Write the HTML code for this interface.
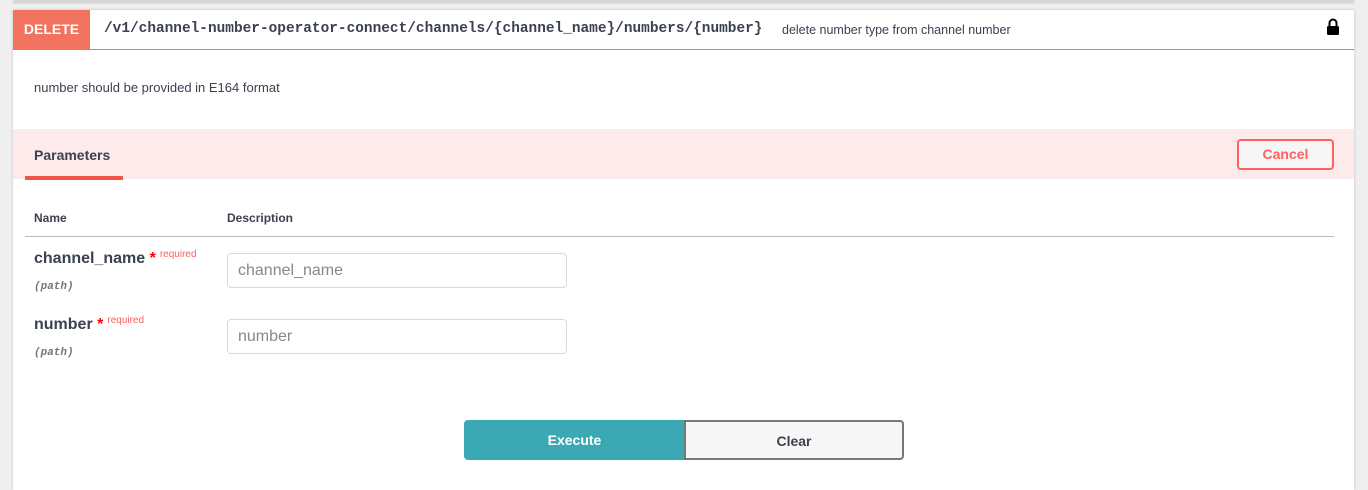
<!DOCTYPE html>
<html><head><style>
body{margin:0;width:1368px;height:483px;background:#efefef;font-family:"Liberation Sans",sans-serif;position:relative;overflow:hidden}
.top{position:absolute;left:13px;top:0;width:1341px;height:2px;background:#d6d6d6;box-shadow:0 1px 2px rgba(0,0,0,.2)}
.card{position:absolute;left:13px;top:10px;width:1341px;height:480px;background:#fff;box-shadow:0 0 3px rgba(0,0,0,.2)}
.hdr{position:absolute;left:0;top:0;width:1341px;height:39px;border-bottom:1px solid #f0725f}
.badge{position:absolute;left:0;top:0;width:77px;height:39px;background:#f0725f;color:#fff;font-weight:bold;font-size:14px;text-align:center;line-height:39px}
.path{position:absolute;left:91px;top:11px;font-family:"Liberation Mono",monospace;font-weight:bold;font-size:14.45px;color:#3b4151}
.sum{position:absolute;left:769px;top:13px;font-size:12.5px;color:#3b4151}
.desc{position:absolute;left:21px;top:70px;font-size:13px;color:#3b4151}
.band{position:absolute;left:0;top:119px;width:1341px;height:50px;background:#fcebea}
.ptitle{position:absolute;left:21px;top:137px;font-weight:bold;font-size:14px;color:#3b4151}
.ul{position:absolute;left:12px;top:166px;width:98px;height:4px;background:#f0544b}
.cancel{position:absolute;left:1224px;top:129px;width:93px;height:27px;border:2px solid #ff6060;border-radius:4px;background:#f6f6f6;color:#ff6060;font-weight:bold;font-size:14px;text-align:center;line-height:27px}
.th{position:absolute;top:201px;font-weight:bold;font-size:12px;color:#3b4151}
.line{position:absolute;left:12px;top:226px;width:1309px;height:1px;background:#bbb}
.pn{position:absolute;left:21px;font-weight:bold;font-size:16px;color:#3b4151;white-space:nowrap}
.pn .st{color:red;font-size:16px}
.pn .rq{color:#ff6060;font-size:10px;font-weight:normal;position:relative;top:-6px;margin-left:4px}
.pp{position:absolute;left:21px;font-family:"Liberation Mono",monospace;font-style:italic;font-size:11px;color:#777;font-weight:bold}
.inp{position:absolute;left:214px;width:340px;height:35px;border:1px solid #d9d9d9;border-radius:4px;color:#888;font-size:16px;line-height:34px;padding-left:10px;box-sizing:border-box}
.btn{position:absolute;top:410px;height:40px;font-weight:bold;font-size:14px;text-align:center;box-sizing:border-box;line-height:38px;color:#3b4151}
</style></head><body>
<div class="top"></div>
<div class="card">
<div class="hdr"><div class="badge">DELETE</div>
<div class="path">/v1/channel-number-operator-connect/channels/{channel_name}/numbers/{number}</div>
<div class="sum">delete number type from channel number</div>
<svg style="position:absolute;left:1313px;top:8px" width="14" height="18" viewBox="0 0 14 18"><path d="M3.5 8V5a3.5 3.5 0 0 1 7 0v3" fill="none" stroke="#000" stroke-width="2"/><rect x="1" y="8" width="12" height="9" rx="1.5" fill="#000"/></svg>
</div>
<div class="desc">number should be provided in E164 format</div>
<div class="band"></div>
<div class="ptitle">Parameters</div><div class="ul"></div>
<div class="cancel">Cancel</div>
<div class="th" style="left:21px">Name</div><div class="th" style="left:214px">Description</div>
<div class="line"></div>
<div class="pn" style="top:240px">channel_name <span class="st">*</span><span class="rq">required</span></div>
<div class="pp" style="top:271px">(path)</div>
<div class="inp" style="top:243px">channel_name</div>
<div class="pn" style="top:306px">number <span class="st">*</span><span class="rq">required</span></div>
<div class="pp" style="top:337px">(path)</div>
<div class="inp" style="top:309px">number</div>
<div class="btn" style="left:451px;width:221px;background:#3aa9b3;color:#fff;border-radius:4px 0 0 4px;line-height:40px">Execute</div>
<div class="btn" style="left:671px;width:220px;border:2px solid #777;border-radius:0 4px 4px 0;background:#f7f7f7">Clear</div>
</div>
</body></html>
